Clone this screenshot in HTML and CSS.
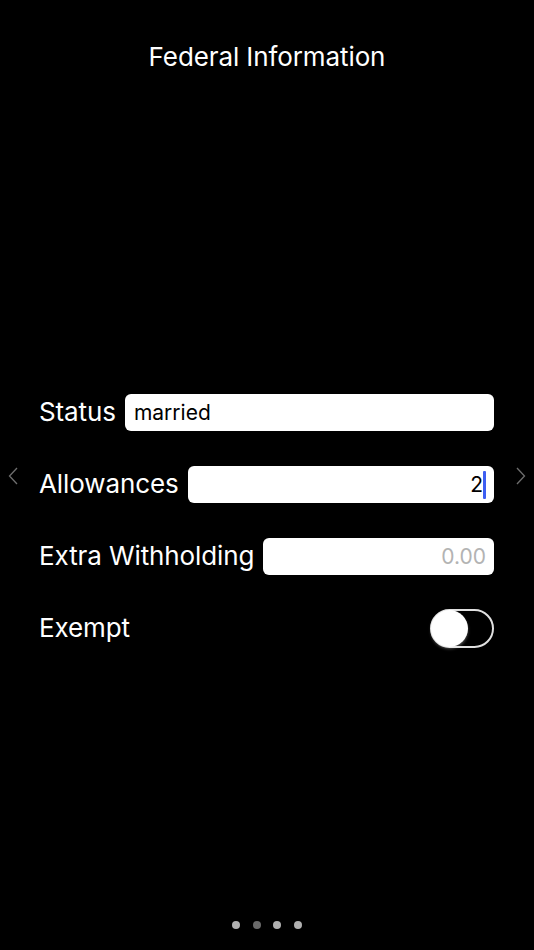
FILE: index.html
```html
<!DOCTYPE html>
<html lang="en">
<head>
<meta charset="utf-8">
<title>Federal Information</title>
<link rel="stylesheet" href="styles.css">
</head>
<body>
<div class="screen">
  <h1 class="title">Federal Information</h1>
  <div class="middle">
    <div class="chev chev-left">
      <svg width="10" height="18" viewBox="0 0 10 18"><path d="M9 1 L1.5 9 L9 17" fill="none" stroke="#6e6e6e" stroke-width="1.3"/></svg>
    </div>
    <form class="form">
      <div class="row">
        <span class="label">Status</span>
        <div class="field field-left">married</div>
      </div>
      <div class="row">
        <span class="label">Allowances</span>
        <div class="field field-right">2<span class="caret"></span></div>
      </div>
      <div class="row">
        <span class="label">Extra Withholding</span>
        <div class="field field-right placeholder">0.00</div>
      </div>
      <div class="row row-toggle">
        <span class="label">Exempt</span>
        <div class="toggle"><div class="knob"></div></div>
      </div>
    </form>
    <div class="chev chev-right">
      <svg width="10" height="18" viewBox="0 0 10 18"><path d="M1 1 L8.5 9 L1 17" fill="none" stroke="#6e6e6e" stroke-width="1.3"/></svg>
    </div>
  </div>
  <div class="dots">
    <span class="dot"></span>
    <span class="dot dot-active"></span>
    <span class="dot"></span>
    <span class="dot"></span>
  </div>
</div>
</body>
</html>
```

FILE: styles.css
```css
html, body {
  margin: 0;
  padding: 0;
  background: #000;
}
body {
  font-family: Inter, "Liberation Sans", sans-serif;
  color: #fff;
}
.screen {
  width: 534px;
  height: 950px;
  display: flex;
  flex-direction: column;
  box-sizing: border-box;
}
.title {
  margin: 40px 0 0;
  font-size: 26px;
  font-weight: 400;
  line-height: 34px;
  text-align: center;
  letter-spacing: -0.1px;
}
.middle {
  display: flex;
  align-items: flex-start;
  margin-top: 320px;
  padding: 0 8px;
}
.chev {
  width: 10px;
  padding-top: 73px;
  display: flex;
}
.form {
  flex: 1;
  display: flex;
  flex-direction: column;
  gap: 35px;
  padding: 0 22px 0 21px;
}
.row {
  display: flex;
  align-items: center;
  gap: 9px;
  height: 37px;
}
.label {
  font-size: 26px;
  line-height: 30px;
  white-space: nowrap;
  margin-top: -2px;
  letter-spacing: -0.1px;
}
.field {
  flex: 1;
  height: 37px;
  background: #fff;
  border-radius: 6px;
  color: #000;
  font-size: 21px;
  display: flex;
  align-items: center;
  padding: 0 8px 0 9px;
  box-sizing: border-box;
}
.field-right {
  justify-content: flex-end;
}
.placeholder {
  color: #b3b3b3;
}
.caret {
  display: inline-block;
  width: 3px;
  height: 28px;
  background: #3d5ef2;
  margin-left: 0;
  border-radius: 1px;
}
.row-toggle {
  justify-content: space-between;
  height: 39px;
  margin-top: -1px;
}
.toggle {
  width: 64px;
  height: 39px;
  box-sizing: border-box;
  border: 2px solid #e0e0e0;
  border-radius: 20px;
  position: relative;
}
.knob {
  position: absolute;
  left: -1px;
  top: -1px;
  width: 37px;
  height: 37px;
  border-radius: 50%;
  background: #fff;
  box-shadow: 0 2px 3px rgba(255,255,255,0.3);
}
.dots {
  margin-top: auto;
  margin-bottom: 21px;
  display: flex;
  justify-content: center;
  gap: 12.5px;
  padding-left: 0;
}
.dot {
  width: 8px;
  height: 8px;
  border-radius: 50%;
  background: #b0b0b0;
}
.dot-active {
  background: #6a6a6a;
}
```
